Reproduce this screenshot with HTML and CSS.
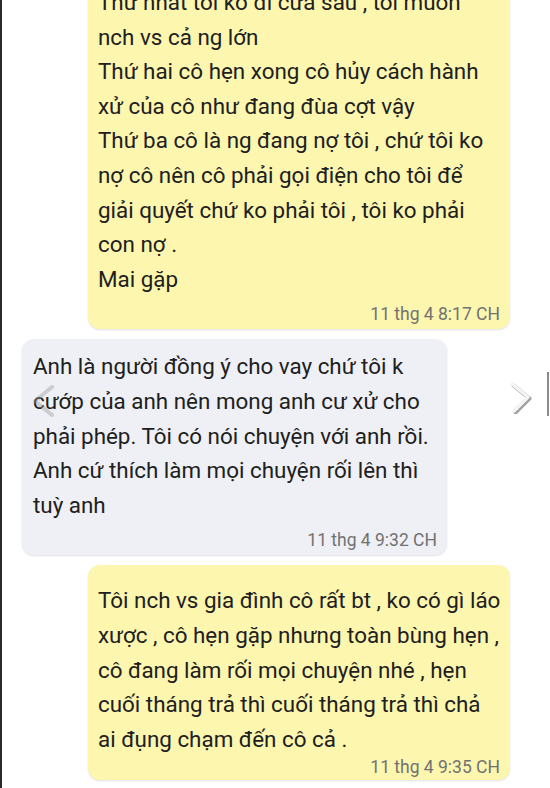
FILE: index.html
```html
<!DOCTYPE html>
<html lang="vi">
<head>
<meta charset="utf-8">
<title>Tin nhắn</title>
<link rel="stylesheet" href="styles.css">
</head>
<body>
<div class="screen">
  <div class="thread">
    <div class="msg out first">
      <div class="bubble yellow">
        <p class="text">Thứ nhất tôi ko đi cửa sau , tôi muốn<br>nch vs cả ng lớn<br>Thứ hai cô hẹn xong cô hủy cách hành<br>xử của cô như đang đùa cợt vậy<br>Thứ ba cô là ng đang nợ tôi , chứ tôi ko<br>nợ cô nên cô phải gọi điện cho tôi để<br>giải quyết chứ ko phải tôi , tôi ko phải<br>con nợ .<br>Mai gặp</p>
        <div class="time">11 thg 4 8:17 CH</div>
      </div>
    </div>
    <div class="msg in">
      <div class="bubble grey">
        <p class="text">Anh là người đồng ý cho vay chứ tôi k<br>cướp của anh nên mong anh cư xử cho<br>phải phép. Tôi có nói chuyện với anh rồi.<br>Anh cứ thích làm mọi chuyện rối lên thì<br>tuỳ anh</p>
        <div class="time">11 thg 4 9:32 CH</div>
      </div>
    </div>
    <div class="msg out last">
      <div class="bubble yellow tight">
        <p class="text">Tôi nch vs gia đình cô rất bt , ko có gì láo<br>xược , cô hẹn gặp nhưng toàn bùng hẹn ,<br>cô đang làm rối mọi chuyện nhé , hẹn<br>cuối tháng trả thì cuối tháng trả thì chả<br>ai đụng chạm đến cô cả .</p>
        <div class="time">11 thg 4 9:35 CH</div>
      </div>
    </div>
  </div>
  <svg class="nav prev" viewBox="0 0 30 36" width="30" height="36" aria-hidden="true">
    <path d="M24 4 L7 18 L24 32" fill="none" stroke="#9a9a9a" stroke-width="4" stroke-linecap="round" stroke-linejoin="round"/>
  </svg>
  <svg class="nav next" viewBox="0 0 30 36" width="30" height="36" aria-hidden="true">
    <path d="M7 6 L23 19 L9 33" fill="none" stroke="#555" stroke-width="4" stroke-linecap="round" stroke-linejoin="round" opacity="0.55" transform="translate(1.5,1.5)"/>
    <path d="M7 6 L23 19 L9 33" fill="none" stroke="#f4f4f4" stroke-width="3.5" stroke-linecap="round" stroke-linejoin="round"/>
  </svg>
  <div class="scrollbar"></div>
</div>
</body>
</html>
```
FILE: styles.css
```css
html, body {
  margin: 0;
  padding: 0;
  background: #ffffff;
}

.screen {
  position: relative;
  width: 548px;
  height: 788px;
  overflow: hidden;
  border-left: 2px solid #2a2a2a;
  background: #ffffff;
  font-family: Roboto, "Noto Sans", "Liberation Sans", sans-serif;
}

.thread {
  display: flex;
  flex-direction: column;
  gap: 10px;
  margin-top: -33px;
}

.msg {
  display: flex;
}

.msg.out {
  padding-left: 86px;
}

.msg.in {
  padding-left: 20px;
}

.bubble {
  border-radius: 12px;
  box-shadow: 0 1px 2px rgba(0, 0, 0, 0.12);
  padding: 18px 10px 4px 10px;
}

.bubble.yellow {
  width: 402px;
  background: #fcf6af;
}

.bubble.grey {
  width: 404px;
  background: #eef0f5;
  padding-top: 10px;
  padding-left: 11px;
}

.text {
  margin: 0;
  font-size: 22.4px;
  line-height: 34.6px;
  color: #202020;
  white-space: nowrap;
}

.time {
  margin-top: 7px;
  text-align: right;
  font-size: 17.5px;
  line-height: 22px;
  color: #727272;
}

.bubble.tight {
  padding-bottom: 2px;
}

.bubble.tight .time {
  margin-top: 0;
}

.nav {
  position: absolute;
}

.nav.prev {
  left: 26px;
  top: 383px;
  opacity: 0.4;
}

.nav.next {
  left: 503px;
  top: 378px;
}

.scrollbar {
  position: absolute;
  right: 1px;
  top: 372px;
  width: 2px;
  height: 44px;
  background: #8a8a8a;
}
```
